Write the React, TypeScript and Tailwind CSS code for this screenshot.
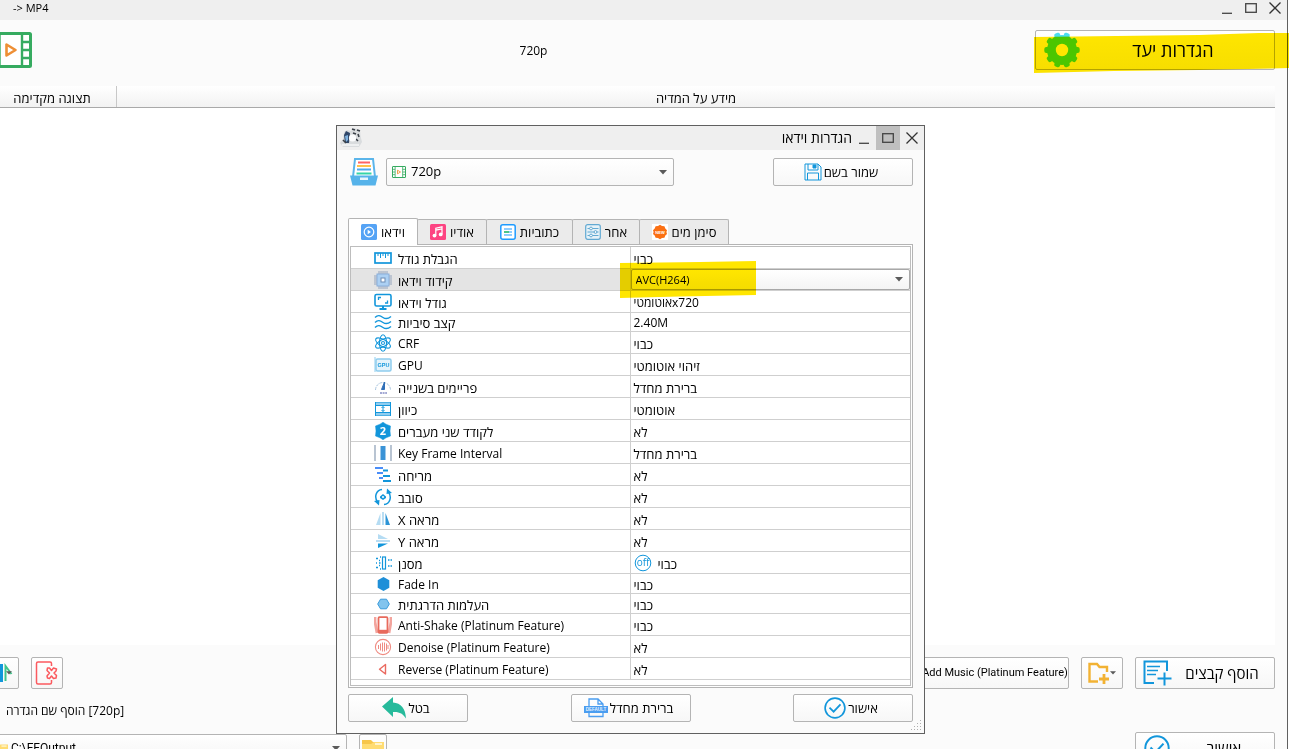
import React from 'react';

type IconProps = { className?: string };

const BLUE = '#1296db';

const FilmIcon: React.FC<IconProps> = ({ className }) => (
  <svg viewBox="0 0 42 36" className={className} fill="none">
    <rect x="1.5" y="1.5" width="39" height="33" rx="1" fill="#fff" stroke="#36ab60" strokeWidth="3" />
    <path d="M9.5 1v34M32 1v34M1 10h8M1 18h8M1 26h8M32 10h8M32 18h8M32 26h8" stroke="#36ab60" strokeWidth="2.4" />
    <path d="M16.500 12.500v11l9-5.500z" stroke="#ee8f35" strokeWidth="2.6" strokeLinejoin="round" />
  </svg>
);

const GearIcon: React.FC<IconProps> = ({ className }) => (
  <svg viewBox="0 0 36 36" className={className}>
    <g fill="#4cdcee">
      <circle cx="18" cy="18" r="15" />
      {[18, 54, 90, 126, 162, 198, 234, 270, 306, 342].map((a) => (
        <rect key={a} x="15" y="0.300" width="6" height="8" rx="2" transform={`rotate(${a} 18 18)`} />
      ))}
    </g>
    <circle cx="18" cy="18" r="6.200" fill="#fff" />
  </svg>
);

const ArrowDown: React.FC<IconProps> = ({ className }) => (
  <svg viewBox="0 0 8 5" className={className}>
    <path d="M0 0h8L4 4.500z" fill="#5a5a5a" />
  </svg>
);

const FolderIcon: React.FC<IconProps> = ({ className }) => (
  <svg viewBox="0 0 22 18" className={className}>
    <path d="M0 1h9l2 2h11v15H0z" fill="#f7c64a" />
    <path d="M0 5h9l3-2h10v15H0z" fill="#ffdc72" />
    <rect x="13" y="4" width="7" height="2" fill="#fff3c9" />
  </svg>
);

const CheckCircle: React.FC<IconProps> = ({ className }) => (
  <svg viewBox="0 0 24 24" className={className} fill="none" stroke={BLUE}>
    <circle cx="12" cy="12" r="10.800" strokeWidth="1.800" />
    <path d="M6 11.500l4.500 4.500 7.500-8" strokeWidth="1.900" />
  </svg>
);

const DrawerIcon = () => (
  <svg viewBox="0 0 28 28" className="h-7 w-7 shrink-0" fill="none">
    <path d="M3 19L5 1h18l2 18" stroke="#5bb5ea" strokeWidth="2" fill="#fff" />
    <path d="M8 4.500h12" stroke="#ff6464" strokeWidth="2" />
    <path d="M7 8h14" stroke="#ffc24b" strokeWidth="2" />
    <path d="M7 11.500h14" stroke="#4fa9ee" strokeWidth="2" />
    <path d="M6.500 15.500h15" stroke="#35d4a8" strokeWidth="2" />
    <path d="M0 17.500h28l-2.500 10h-23z" fill="#56b3ea" />
    <rect x="10" y="19.500" width="8" height="2.500" fill="#e7f5fd" />
  </svg>
);

const SaveIcon = () => (
  <svg viewBox="0 0 18 18" className="h-[18px] w-[18px]" fill="none" stroke={BLUE}>
    <path d="M1 1h13l3 3v13H1z" />
    <path d="M4 1v6h10V1M3.500 17v-7h11v7" />
    <path d="M9 2h3v3H9z" fill={BLUE} />
  </svg>
);

const UndoIcon = () => (
  <svg viewBox="0 0 24 22" className="h-[22px] w-6">
    <path d="M0 9.500L11 0v5.500c8 .5 12.500 6 13 16-3-5-7-7-13-6.500v5z" fill="#27ba9b" />
  </svg>
);

const DefaultIcon = () => (
  <svg viewBox="0 0 24 20" className="h-5 w-6" fill="none" stroke="#4a9df0" strokeWidth="1.300">
    <path d="M5 8V1h9l5 5v2M14 1v5h5M5 14v4.500h14V14" />
    <rect x="0" y="8" width="24" height="7" fill="#4a9df0" stroke="none" />
    <text x="12" y="13.300" fontSize="4.500" fontWeight="700" textAnchor="middle" fill="#e8f3ff" stroke="none" fontFamily="Liberation Sans, sans-serif">
      DEFAULT
    </text>
  </svg>
);

const TabVideo = () => (
  <svg viewBox="0 0 16 16" className="h-4 w-4" fill="none">
    <rect width="16" height="16" rx="1.500" fill="#55a3f5" />
    <circle cx="8" cy="8" r="4.800" stroke="#fff" strokeWidth="1.200" />
    <path d="M6.700 5.800v4.400L10 8z" fill="#fff" />
  </svg>
);

const TabAudio = () => (
  <svg viewBox="0 0 16 16" className="h-4 w-4" fill="none">
    <rect width="16" height="16" rx="1.500" fill="#fd4382" />
    <path d="M5.800 11.500V4.200l6.200-1.400v7.400M5.800 6.200L12 4.800" stroke="#fff" strokeWidth="1.200" />
    <circle cx="4.500" cy="11.600" r="1.900" fill="#fff" />
    <circle cx="10.700" cy="10.400" r="1.900" fill="#fff" />
  </svg>
);

const TabSubtitle = () => (
  <svg viewBox="0 0 16 16" className="h-4 w-4" fill="none" stroke="#1e9bff">
    <rect x=".8" y=".8" width="14.400" height="14.400" rx="2" fill="#fff" strokeWidth="1.500" />
    <path d="M4 5h8M9 8h3M4 11h8" strokeWidth="1.200" />
    <path d="M4 8h5" stroke="#1fb86b" strokeWidth="1.600" />
  </svg>
);

const TabOther = () => (
  <svg viewBox="0 0 16 16" className="h-4 w-4" fill="none" stroke="#62a9d2">
    <rect x=".7" y=".7" width="14.600" height="14.600" rx="2" fill="#e6f2f8" strokeWidth="1.200" />
    <path d="M2.500 4.500h11M2.500 8h11M2.500 11.500h11" />
    <g fill="#fff">
      <circle cx="6" cy="4.500" r="1.400" />
      <circle cx="10.500" cy="8" r="1.400" />
      <circle cx="6" cy="11.500" r="1.400" />
    </g>
  </svg>
);

const TabWatermark = () => (
  <svg viewBox="0 0 16 16" className="h-4 w-4">
    <rect width="16" height="16" fill="#fff" />
    <path d="M8 .8l2 1.200 2.400.2.900 2.200L15 6.200 14.400 8l.6 1.900-1.700 1.700-.9 2.200-2.400.2L8 15.200 6 14l-2.400-.2-.9-2.200L1 9.900 1.600 8 1 6.200l1.700-1.800.9-2.200L6 2z" fill="#fb6f12" />
    <text x="8" y="9.500" fontSize="4" fontWeight="700" textAnchor="middle" fill="#fff" fontFamily="Liberation Sans, sans-serif">
      NEW
    </text>
  </svg>
);

const AddFilesIcon = () => (
  <svg viewBox="0 0 30 26" className="h-[26px] w-[30px]" fill="none" stroke={BLUE}>
    <path d="M25 11V1.500H2.500V23H12" strokeWidth="2" />
    <path d="M5 6.500h13M5 10.500h11M5 14.500h9" strokeWidth="1.600" />
    <path d="M22.500 12.500v13M15.500 18.500h14" strokeWidth="2" />
  </svg>
);

const AddFolderIcon = () => (
  <svg viewBox="0 0 22 22" className="h-[22px] w-[22px]" fill="none" stroke="#f2b233">
    <path d="M10 19.500H1.500V2H9l2.500 3h7.500v5" strokeWidth="2.400" />
    <path d="M16 12v10M11 17h10" strokeWidth="2.800" />
  </svg>
);

const RemoveIcon = () => (
  <svg viewBox="0 0 24 24" className="h-6 w-6" fill="none" stroke="#fb5a5f" strokeWidth="1.500" strokeLinejoin="round">
    <path d="M16.500 5V2.500Q16.500 1 15 1H3Q1.500 1 1.500 2.500v19Q1.500 23 3 23h12q1.500 0 1.500-1.500V19" />
    <path d="M12.500 7l2 0 2 2.500 2-2.500 3 1-.500 2-2 2 2.500 2.500-.500 2.500-2.500.500-2-2.500-2 2.500-2-.500-.500-2 2.500-3-2.500-2.500z" />
  </svg>
);

const MirrorIcon = () => (
  <svg viewBox="0 0 24 20" className="h-5 w-6" fill="none">
    <path d="M10 18V2L1 18z" fill="#4ab4ea" />
    <path d="M11.500 1v18" stroke="#1296db" strokeWidth="3" />
    <path d="M15.500 18V3l6 8" stroke="#41c58b" strokeWidth="2" />
  </svg>
);

const AppIcon = () => (
  <svg viewBox="0 0 22 20" className="h-5 w-[22px]">
    <path d="M0 15l3-4L4 4l3-2 4 1 3-3 6 2 .500 6L22 14l-3 5H3z" fill="#d9dcde" />
    <path d="M4 7l2-4 4 2-1 10H5z" fill="#2f4668" />
    <path d="M5 8l3-1 0 5-2 2z" fill="#7fb2e0" />
    <path d="M12 1l3 1M17 2l3 1M13 5l3 1M18 6l1 3M16 11l2 2M3 12l3 3" fill="none" stroke="#3a4048" strokeWidth="1.600" />
    <circle cx="12.500" cy="10" r="3.600" fill="#fbfcfd" />
    <path d="M2 17h17" stroke="#eef0f1" strokeWidth="2" />
  </svg>
);

const rowIcons: Record<string, React.ReactNode> = {
  ruler: (
    <g>
      <rect x="1" y="4" width="16" height="10" fill="#fff" strokeWidth="1.700" />
      <path d="M4 4v3M6.500 4v5M9 4v3M11.500 4v5M14 4v3" strokeWidth="1" />
    </g>
  ),
  chip: (
    <g stroke="#8296b2">
      <path d="M5 0v18M7 0v18M9 0v18M11 0v18M13 0v18M0 5h18M0 7h18M0 9h18M0 11h18M0 13h18" strokeWidth=".8" />
      <rect x="3" y="3" width="12" height="12" fill="#acd0f3" stroke="#8aaed9" />
      <rect x="7" y="7" width="4" height="4" fill="#fff" stroke="#6d8bb3" />
    </g>
  ),
  monitor: (
    <g>
      <rect x="1" y="1.500" width="16" height="11.500" rx="1.500" fill="#fff" strokeWidth="1.600" />
      <path d="M4.500 7V4.500H7M13.500 7.500V10H11" strokeWidth="1.300" />
      <path d="M9 13v3M5.500 16h7" strokeWidth="2" />
    </g>
  ),
  waves: (
    <path d="M1 4.500c3-3 5-2 8 0s5 1.500 8-1M1 9.500c3-3 5-2 8 0s5 1.500 8-1M1 14.500c3-3 5-2 8 0s5 1.500 8-1" strokeWidth="1.400" />
  ),
  atom: (
    <g strokeWidth="1.100">
      <ellipse cx="9" cy="9" rx="3.500" ry="8.300" />
      <ellipse cx="9" cy="9" rx="3.500" ry="8.300" transform="rotate(60 9 9)" />
      <ellipse cx="9" cy="9" rx="3.500" ry="8.300" transform="rotate(120 9 9)" />
      <circle cx="9" cy="9" r="1.500" />
    </g>
  ),
  gpu: (
    <g stroke="#8fcdee">
      <path d="M1 1v15" />
      <rect x="2" y="3" width="15" height="12" rx="1.500" fill="#e4f3fb" strokeWidth="1.500" />
      <text x="9.500" y="11" fontSize="5.500" fontWeight="700" textAnchor="middle" fill="#1296db" stroke="none" fontFamily="Liberation Sans, sans-serif">
        GPU
      </text>
    </g>
  ),
  gauge: (
    <g>
      <path d="M1.500 12a7.500 7.500 0 0 1 15 0" stroke="#a9c6e0" strokeDasharray="3 1" />
      <path d="M7.500 11.500L10.500 4v7.500z" fill="#2f6fb8" stroke="#2f6fb8" />
      <path d="M6 15h7" stroke="#a4a9d4" strokeWidth="2" strokeDasharray="2 .6" />
    </g>
  ),
  orientation: (
    <g>
      <rect x="1.500" y="2.500" width="15" height="13" fill="#fff" stroke="#4fb0e4" />
      <path d="M2 4h14M2 14h14" stroke="#8fcdf0" strokeWidth="2" />
      <path d="M2 5.500h14M2 12.500h14M1.500 2v14M16.500 2v14" />
      <path d="M9 6.500v5M7.500 8L9 6.500 10.500 8M7.500 10L9 11.500l1.500-1.500" />
    </g>
  ),
  two: (
    <g>
      <path d="M9 .2l3 2 4.500 1.800-.500 5 .500 5-4.500 1.800-3 2-3-2L1.500 14 2 9l-.5-5L6 2.200z" fill={BLUE} stroke={BLUE} strokeWidth=".5" />
      <text x="9" y="13" fontSize="11" fontWeight="700" textAnchor="middle" fill="#fff" stroke="none" fontFamily="Open Sans, sans-serif">
        2
      </text>
    </g>
  ),
  keyframe: (
    <g>
      <path d="M1 1v16M17 1v16" stroke="#8a9db5" strokeWidth="1.200" />
      <path d="M9 2v14" stroke="#3b93d6" strokeWidth="5" />
    </g>
  ),
  stagger: (
    <g strokeWidth="2">
      <path d="M1 2h8M3 7h6M5 12h4" stroke="#4a8df8" />
      <path d="M9 4.500h5M9 10h7M9 15h8" />
    </g>
  ),
  rotate: (
    <g strokeWidth="1.500">
      <path d="M8 1.500C2 2 0 9 3.500 14M10 16.500c6-.5 8-7.500 4.500-12.500" />
      <path d="M0 13l5.500-1-.5 5.500zM18 5l-5.500 1L13 .5z" fill={BLUE} stroke="none" />
      <path d="M6 8.500L9 6l3 2.500V10L9 12 6 10z" fill={BLUE} stroke="none" />
      <circle cx="9" cy="9" r="1" fill="#fff" stroke="none" />
    </g>
  ),
  mirrorX: (
    <g stroke="none">
      <path d="M6.500 3v12H2z" fill="#b5dcf3" />
      <path d="M8.200 2h1.600v13H8.200z" fill="#a7d5f0" />
      <path d="M11.500 3v12H16z" fill="#2c94d6" />
    </g>
  ),
  mirrorY: (
    <g stroke="none">
      <path d="M4 7V2l10 5z" fill="#b5dcf3" />
      <path d="M2 8.200h14v1.600H2z" fill="#a7d5f0" />
      <path d="M4 11.500v4.500l10-4.500z" fill={BLUE} />
    </g>
  ),
  filter: (
    <g>
      <rect x="8.500" y="3" width="3" height="12" strokeWidth="1.200" />
      <path d="M2 4.500h2M2 9h1M2 13.500h2M5 6.500h1M5 9h1.500M5 11.500h1M6 3h1M6 15h1M14 6h1.500M14 12h1.500M16.500 6H18M16.500 12H18" strokeWidth="1.600" />
    </g>
  ),
  hexSolid: <path d="M9.500 2l5.800 3.300v7.400L9.500 16l-5.800-3.300V5.300z" fill="#1f8fd8" stroke="none" />,
  hexLight: <path d="M6.500 4.200h6L15.300 9l-2.800 4.800h-6L3.700 9z" fill="#82c4ee" stroke="#3a9bdb" />,
  shake: (
    <g>
      <path d="M1 1v5l2 11M17 1v5l-2 11" stroke="#f3a49d" strokeWidth="2.800" />
      <rect x="4.500" y="1.200" width="9" height="15.600" rx="1" fill="#fff" stroke="#e86a5c" strokeWidth="1.800" />
      <path d="M4.500 15.300h9" stroke="#e86a5c" strokeWidth="3" />
    </g>
  ),
  denoise: (
    <g stroke="#ef8b82">
      <circle cx="9" cy="9" r="7.600" strokeWidth="1.100" />
      <path d="M4.500 7v4M6.500 5.500v7M8.500 4.500v9M10.500 4.500v9M12.500 5.500v7M14 7v4" />
    </g>
  ),
  reverse: <path d="M11.500 4.500v9.500L5.500 9.200z" stroke="#ea6a60" strokeWidth="1.400" strokeLinejoin="round" />,
};

const RowIcon: React.FC<{ name: string }> = ({ name }) => (
  <svg viewBox="0 0 18 18" className="h-[18px] w-[18px] shrink-0" fill="none" stroke={BLUE}>
    {rowIcons[name]}
  </svg>
);

interface Row {
  icon: string;
  label: string;
  value: string;
  height?: string;
  latin?: boolean;
}

const rows: Row[] = [
  { icon: 'ruler', label: 'הגבלת גודל', value: 'כבוי' },
  { icon: 'chip', label: 'קידוד וידאו', value: 'AVC(H264)' },
  { icon: 'monitor', label: 'גודל וידאו', value: 'אוטומטיx720' },
  { icon: 'waves', label: 'קצב סיביות', value: '2.40M', height: 'h-[19px]' },
  { icon: 'atom', label: 'CRF', value: 'כבוי', latin: true },
  { icon: 'gpu', label: 'GPU', value: 'זיהוי אוטומטי', latin: true },
  { icon: 'gauge', label: 'פריימים בשנייה', value: 'ברירת מחדל' },
  { icon: 'orientation', label: 'כיוון', value: 'אוטומטי' },
  { icon: 'two', label: 'לקודד שני מעברים', value: 'לא' },
  { icon: 'keyframe', label: 'Key Frame Interval', value: 'ברירת מחדל', latin: true },
  { icon: 'stagger', label: 'מריחה', value: 'לא' },
  { icon: 'rotate', label: 'סובב', value: 'לא' },
  { icon: 'mirrorX', label: 'מראה X', value: 'לא' },
  { icon: 'mirrorY', label: 'מראה Y', value: 'לא' },
  { icon: 'filter', label: 'מסנן', value: 'כבוי' },
  { icon: 'hexSolid', label: 'Fade In', value: 'כבוי', height: 'h-5', latin: true },
  { icon: 'hexLight', label: 'העלמות הדרגתית', value: 'כבוי', height: 'h-5' },
  { icon: 'shake', label: 'Anti-Shake (Platinum Feature)', value: 'כבוי', latin: true },
  { icon: 'denoise', label: 'Denoise (Platinum Feature)', value: 'לא', latin: true },
  { icon: 'reverse', label: 'Reverse (Platinum Feature)', value: 'לא', latin: true },
];

const tabs = [
  { label: 'וידאו', icon: <TabVideo />, width: 'w-[70px]' },
  { label: 'אודיו', icon: <TabAudio />, width: 'w-[70px]' },
  { label: 'כתוביות', icon: <TabSubtitle />, width: 'w-[87px]' },
  { label: 'אחר', icon: <TabOther />, width: 'w-[68px]' },
  { label: 'סימן מים', icon: <TabWatermark />, width: 'w-[90px]' },
];

const buttonStyle = 'flex items-center justify-center rounded-xs border border-[#b4b4b4] bg-linear-to-b from-white to-[#f7f7f7]';

const WindowControls: React.FC<{ active?: boolean }> = ({ active }) => (
  <div className="flex self-stretch">
    <button aria-label="Minimize" className="flex w-6 items-center justify-center">
      <svg viewBox="0 0 12 12" className="h-3 w-3" stroke="#444" strokeWidth="1.300">
        <path d="M1 11.300h10" />
      </svg>
    </button>
    <button aria-label="Maximize" className={`flex w-6 items-center justify-center ${active ? 'bg-[#bfbfbf]' : ''}`}>
      <svg viewBox="0 0 12 12" className="h-3 w-3" fill="none" stroke="#444" strokeWidth="1.300">
        <rect x=".7" y="1.700" width="10.600" height="8.600" />
      </svg>
    </button>
    <button aria-label="Close" className="flex w-6 items-center justify-center">
      <svg viewBox="0 0 12 12" className="h-3 w-3" stroke="#333" strokeWidth="1.300">
        <path d="M.5.5l11 11M11.500.5l-11 11" />
      </svg>
    </button>
  </div>
);

const SettingsTable = () => (
  <div className="border border-[#b4b4b4] bg-white p-px">
    <div className="border border-[#bdbdbd] pb-[5px]">
      <table className="w-full table-fixed border-separate border-spacing-0 text-left">
        <tbody>
          {rows.map((row) => {
            const selected = row.icon === 'chip';
            return (
              <tr key={row.icon} className={selected ? 'bg-[#e4e4e4]' : ''}>
                <td className={`border-r border-b border-[#cfcfcf] p-0 pl-[23px] ${row.height ?? 'h-[22px]'}`}>
                  <div className="flex items-center gap-1.5">
                    <RowIcon name={row.icon} />
                    <span dir="auto" className={`pt-0.5 leading-4 whitespace-nowrap ${row.latin ? 'text-xs' : 'text-[13px]'}`}>
                      {row.label}
                    </span>
                  </div>
                </td>
                <td className="border-b border-[#cfcfcf] p-0">
                  {selected ? (
                    <div className="relative">
                      <select
                        aria-label={row.label}
                        className="block h-[21px] w-full appearance-none rounded-xs border border-[#a8a8a8] bg-linear-to-b from-white to-[#f4f4f4] pl-1 text-[11px] leading-4"
                      >
                        <option>{row.value}</option>
                      </select>
                      <ArrowDown className="pointer-events-none absolute top-2 right-[7px] h-[5px] w-2" />
                    </div>
                  ) : (
                    <div className="flex items-center gap-1.5 pl-[3px] leading-4">
                      {row.icon === 'filter' && (
                        <svg viewBox="0 0 18 18" className="h-[18px] w-[18px]" fill="none" stroke={BLUE}>
                          <circle cx="9" cy="9" r="7.800" />
                          <text x="9" y="12" fontSize="10" textAnchor="middle" fill={BLUE} stroke="none" fontFamily="Open Sans, sans-serif">
                            off
                          </text>
                        </svg>
                      )}
                      <span className={`pt-0.5 ${/\d/.test(row.value) ? 'text-xs' : 'text-[13px]'}`}>{row.value}</span>
                    </div>
                  )}
                </td>
              </tr>
            );
          })}
        </tbody>
      </table>
    </div>
  </div>
);

const SettingsDialog = () => (
  <div role="dialog" aria-label="הגדרות וידאו" className="absolute top-[125px] left-[336px] w-[589px] border border-[#606060] bg-[#fbfbfb]">
    <div className="flex h-6 items-center bg-[#efefef] pl-[3px]">
      <AppIcon />
      <span className="ml-auto text-sm">הגדרות וידאו</span>
      <WindowControls active />
    </div>

    <div className="px-[11px] pt-2 pb-[11px]">
      <div className="flex items-center gap-2 pl-0.5">
        <DrawerIcon />
        <div className="relative w-72">
          <select aria-label="Profile" className="block h-7 w-full appearance-none rounded-xs border border-[#b4b4b4] bg-linear-to-b from-white to-[#f7f7f7] pl-6 text-[13px]">
            <option>720p</option>
          </select>
          <FilmIcon className="pointer-events-none absolute top-2 left-1.5 h-3 w-3.5" />
          <ArrowDown className="pointer-events-none absolute top-3 right-[7px] h-[5px] w-2" />
        </div>
        <button className={`ml-auto h-7 w-[140px] gap-0.5 pr-1 text-[13px] ${buttonStyle}`}>
          <SaveIcon />
          <span className="pt-0.5">שמור בשם</span>
        </button>
      </div>

      <div role="tablist" className="mt-8 flex items-end">
        {tabs.map((tab, i) => (
          <button
            key={tab.label}
            role="tab"
            aria-selected={i === 0}
            className={`flex items-center justify-center gap-1 rounded-t-xs border border-b-0 border-[#b4b4b4] ${tab.width} ${
              i === 0 ? 'z-10 -mb-px h-[27px] bg-white' : '-ml-px h-[25px] bg-[#ebebeb]'
            }`}
          >
            {tab.icon}
            <span className="pt-0.5 text-[13px]">{tab.label}</span>
          </button>
        ))}
      </div>

      <SettingsTable />

      <div className="mt-1.5 flex justify-between text-[13px]">
        <button className={`h-7 w-[120px] gap-0.5 pr-1 ${buttonStyle}`}>
          <UndoIcon />
          <span className="pt-0.5">בטל</span>
        </button>
        <button className={`h-7 w-[120px] gap-0.5 pr-1 ${buttonStyle}`}>
          <DefaultIcon />
          <span className="pt-0.5">ברירת מחדל</span>
        </button>
        <button className={`h-7 w-[120px] gap-0.5 pr-1 ${buttonStyle}`}>
          <CheckCircle className="h-[22px] w-[22px]" />
          <span className="pt-0.5">אישור</span>
        </button>
      </div>
    </div>

    {/* Resize grip */}
    <svg viewBox="0 0 12 12" className="absolute right-0.5 bottom-0.5 h-3 w-3" fill="#b0b0b0">
      <path d="M10 1h1v1h-1zM7 4h1v1H7zM10 4h1v1h-1zM4 7h1v1H4zM7 7h1v1H7zM10 7h1v1h-1zM1 10h1v1H1zM4 10h1v1H4zM7 10h1v1H7zM10 10h1v1h-1z" />
    </svg>

    {/* Marker stroke over the codec */}
    <svg viewBox="0 0 137 38" className="pointer-events-none absolute top-[135px] left-[283px] h-[38px] w-[137px] mix-blend-multiply">
      <path d="M0 2L80 1 136 0v34L60 35.500 0 37z" fill="#ffe600" />
    </svg>
  </div>
);

const App: React.FC = () => {
  return (
    <div className="relative flex h-screen overflow-hidden bg-white pr-px font-['Open_Sans','Noto_Sans',sans-serif] text-xs text-black">
      <main className="flex min-w-0 flex-1 flex-col border-r border-[#606060] bg-[#fbfbfb]">
        <div className="flex h-5 shrink-0 items-center bg-[#efefef]">
          <span className="flex-1 pb-1 pl-[13px] text-[11px]">-&gt; MP4</span>
          <div className="flex h-4 self-start">
            <WindowControls />
          </div>
        </div>

        <header className="flex h-[66px] shrink-0 items-center pr-3 pb-1.5">
          <FilmIcon className="-ml-2.5 h-9 w-[42px]" />
          <span className="flex-1 pt-0.5 text-center">720p</span>
          <button className={`h-10 w-60 px-2 ${buttonStyle}`}>
            <GearIcon className="h-9 w-9" />
            <span className="flex-1 text-center text-lg">הגדרות יעד</span>
          </button>
        </header>

        <section className="mr-3 flex min-h-0 flex-1 flex-col bg-white">
          <div className="flex h-[22px] border-b border-[#a9a9a9] bg-linear-to-b from-white to-[#f2f2f2] text-center text-[13px] leading-4">
            <span className="w-[117px] border-r border-[#c8c8c8] pt-1 pr-3">תצוגה מקדימה</span>
            <span className="flex-1 pt-1">מידע על המדיה</span>
          </div>
        </section>

        <footer className="flex h-[104px] shrink-0 flex-col pt-3 pr-3">
          <div className="flex h-8 shrink-0 gap-3">
            <button aria-label="Mirror" className={`-ml-[17px] w-9 ${buttonStyle}`}>
              <MirrorIcon />
              <ArrowDown className="-ml-2 h-1 w-1.5" />
            </button>
            <button aria-label="Remove" className={`mr-auto w-8 ${buttonStyle}`}>
              <RemoveIcon />
            </button>
            <button className={`w-40 pl-3 font-['Roboto',sans-serif] text-[11px] ${buttonStyle}`}>
              <span className="whitespace-nowrap">Add Music (Platinum Feature)</span>
            </button>
            <button aria-label="Add folder" className={`w-[42px] ${buttonStyle}`}>
              <AddFolderIcon />
              <ArrowDown className="h-1 w-1.5" />
            </button>
            <button className={`w-[140px] px-1.5 ${buttonStyle}`}>
              <AddFilesIcon />
              <span className="flex-1 pl-1 text-center text-[15px]">הוסף קבצים</span>
            </button>
          </div>

          <label className="mt-3.5 -ml-3 flex h-4 shrink-0 items-center gap-1.5">
            <input type="checkbox" className="h-3 w-3 appearance-none border border-[#b4b4b4] bg-white" />
            <span dir="rtl">[720p] הוסף שם הגדרה</span>
          </label>

          <div className="mt-[13px] flex shrink-0 items-start gap-3">
            <div className="relative mt-0.5 -ml-3 w-[359px]">
              <select aria-label="Output folder" className="block h-7 w-full appearance-none rounded-xs border border-[#b4b4b4] bg-linear-to-b from-white to-[#f4f4f4] pl-[22px] font-['Roboto',sans-serif] text-xs">
                <option>C:\FFOutput</option>
              </select>
              <FolderIcon className="pointer-events-none absolute top-2 left-1 h-3.5 w-4" />
              <ArrowDown className="pointer-events-none absolute top-3 right-[7px] h-[5px] w-2" />
            </div>
            <button aria-label="Open folder" className={`mt-0.5 h-7 w-7 ${buttonStyle}`}>
              <FolderIcon className="h-[18px] w-[22px]" />
            </button>
            <button className={`ml-auto h-8 w-[140px] px-2 ${buttonStyle}`}>
              <CheckCircle className="h-[26px] w-[26px]" />
              <span className="flex-1 pl-3 text-center text-[15px]">אישור</span>
            </button>
          </div>
        </footer>
      </main>

      {/* Marker stroke over the output settings button */}
      <svg viewBox="0 0 255 42" className="pointer-events-none absolute top-8 right-0 h-[42px] w-[255px] mix-blend-multiply">
        <path d="M0 5L165 3 225 1h30v35l-90 2-85 1L0 41z" fill="#ffe600" />
      </svg>

      <SettingsDialog />
    </div>
  );
};

export default App;
